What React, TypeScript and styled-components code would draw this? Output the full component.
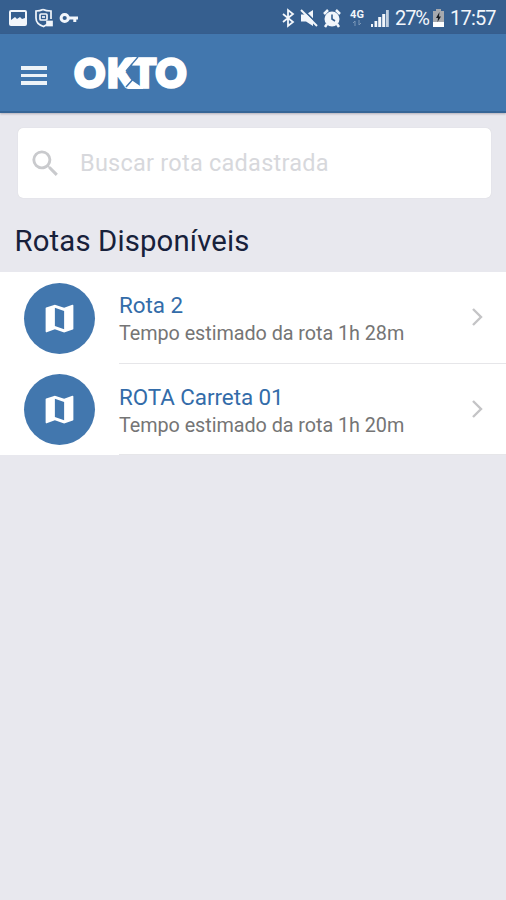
import React from "react";
import styled, { createGlobalStyle } from "styled-components";

const Global = createGlobalStyle`
  * { box-sizing: border-box; }
  body { margin: 0; background: #e8e8ee; font-family: Roboto, "Liberation Sans", sans-serif; }
`;

const Screen = styled.div`
  display: flex;
  flex-direction: column;
  width: 506px;
  height: 900px;
  overflow: hidden;
  background: #e8e8ee;
`;

const StatusBar = styled.div`
  display: flex;
  align-items: center;
  height: 34px;
  flex: none;
  padding: 2px 9px 0 8px;
  background: #365f8f;
  color: #f2f6fb;
`;

const StatusGroup = styled.div<{ $push?: boolean }>`
  display: flex;
  align-items: center;
  height: 32px;
  margin-left: ${(p) => (p.$push ? "auto" : "0")};
`;

const Icon = styled.svg<{ $gap?: number }>`
  display: block;
  flex: none;
  margin-left: ${(p) => p.$gap ?? 0}px;
`;

const StatusText = styled.span<{ $gap: number; $width: number; $spacing: number }>`
  width: ${(p) => p.$width}px;
  margin-left: ${(p) => p.$gap}px;
  font-size: 20px;
  line-height: 32px;
  letter-spacing: ${(p) => p.$spacing}px;
  white-space: nowrap;
`;

const Network = styled.span`
  display: flex;
  flex-direction: column;
  align-items: center;
  width: 16px;
  margin-left: 8px;
  font-size: 11px;
  font-weight: 700;
  line-height: 10px;
`;

const AppBar = styled.header`
  display: flex;
  align-items: center;
  height: 79px;
  flex: none;
  padding-left: 21px;
  background: #4277ae;
  border-bottom: 2px solid #366596;
  box-shadow: 0 1px 2px rgba(80, 70, 80, 0.35);
`;

const MenuButton = styled.button`
  display: flex;
  flex-direction: column;
  gap: 4px;
  width: 26px;
  padding: 0;
  margin-top: 6px;
  border: 0;
  background: none;
`;

const MenuLine = styled.span`
  height: 3.4px;
  background: #edf3f8;
`;

const LogoText = styled.text`
  font-family: Lato, sans-serif;
  font-size: 37px;
  font-weight: 900;
  fill: #fff;
  stroke: #fff;
  stroke-width: 3.6px;
`;

const SearchField = styled.label`
  display: flex;
  align-items: center;
  height: 70px;
  flex: none;
  margin: 15px 15px 0 18px;
  padding-left: 10px;
  border-radius: 5px;
  background: #fff;
  box-shadow: 0 0 1px rgba(0, 0, 0, 0.15);
`;

const SearchInput = styled.input`
  flex: 1;
  min-width: 0;
  margin-left: 17px;
  padding: 0;
  border: 0;
  outline: 0;
  background: none;
  font: 400 23.5px Roboto, sans-serif;
  letter-spacing: 0.25px;
  &::placeholder { color: #d7d8dc; opacity: 1; }
`;

const Heading = styled.h1`
  height: 74px;
  flex: none;
  margin: 0;
  padding: 6px 0 0 14.5px;
  color: #17213b;
  font-size: 29.3px;
  font-weight: 400;
  line-height: 74px;
  letter-spacing: 0.15px;
`;

const List = styled.ul`
  margin: 0;
  padding: 0;
  list-style: none;
  background: #fff;
`;

const Row = styled.li`
  display: flex;
  height: 91.5px;
  padding-left: 24px;
`;

const Badge = styled.div`
  display: flex;
  align-items: center;
  justify-content: center;
  width: 71px;
  height: 71px;
  flex: none;
  margin: 10.5px 24px 0 0;
  border-radius: 50%;
  background: #4277ae;
`;

const RowBody = styled.div`
  display: flex;
  flex: 1;
  align-items: center;
  justify-content: space-between;
  padding-right: 17px;
  border-bottom: 1.5px solid #e6e6e9;
`;

const RowText = styled.div`
  padding-top: 5px;
`;

const RowTitle = styled.div`
  color: #336ca9;
  font-size: 22.4px;
  line-height: 28px;
  letter-spacing: -0.05px;
  white-space: nowrap;
`;

const RowDetail = styled.div`
  color: #757575;
  font-size: 19.8px;
  line-height: 29px;
  letter-spacing: -0.05px;
  white-space: nowrap;
`;

const routes = [
  { name: "Rota 2", time: "1h 28m" },
  { name: "ROTA Carreta 01", time: "1h 20m" },
];

const Logo = () => (
  <Icon $gap={26} width="118" height="48" viewBox="0 -6 118 48" role="img" aria-label="OKTO">
    <LogoText x="1.8 34.2 60.3 83" y="32.4">OKTO</LogoText>
    <path d="M57 24L70 33V34H55Z" fill="#fff" />
    <path d="M53 32L62 22" stroke="#4277ae" strokeWidth="1.5" />
    <path d="M53 16L65 2" stroke="#4277ae" strokeWidth="1.3" />
  </Icon>
);

export default function App() {
  return (
    <>
      <Global />
      <Screen>
        <StatusBar>
          <StatusGroup>
            <Icon width="20" height="18" viewBox="0 0 20 18" fill="none" stroke="currentColor" strokeWidth="2">
              <rect x="2" y="2" width="16" height="14" rx="1" />
              <path d="M3 15V11L7 8L9 10L12 8L14 10L17 9V15Z" fill="currentColor" stroke="none" />
            </Icon>
            <Icon $gap={6} width="20" height="20" viewBox="0 0 20 20" fill="none" stroke="currentColor" strokeWidth="1.7">
              <path d="M9 1.5C7 2.5 5 3 2 3V10C2 14 5 17 9.5 18.5L13 16.5M9 1.5C12 3 14 3 17 3V11" />
              <rect x="6" y="6" width="7" height="6" rx="1" />
              <path d="M8 9H11" />
              <rect x="13" y="13.5" width="5" height="4" fill="currentColor" />
            </Icon>
            <Icon $gap={5} width="20" height="14" viewBox="0 0 20 14" fill="none" stroke="currentColor" strokeWidth="3">
              <circle cx="5.7" cy="7" r="3.6" />
              <path d="M9 7H19M15.8 7V11" />
            </Icon>
          </StatusGroup>
          <StatusGroup $push>
            <Icon width="14" height="20" viewBox="0 0 14 20" fill="none" stroke="currentColor" strokeWidth="1.8">
              <path d="M2 6L12 14L7 18V2L12 6L2 14" />
            </Icon>
            <Icon $gap={5} width="18" height="18" viewBox="0 0 18 18">
              <path d="M1 5.5H6L13 1V17L6 12.5H1Z" fill="currentColor" />
              <path d="M2.5 0L18 15.5" stroke="#365f8f" strokeWidth="1.8" />
              <path d="M1 1L17 17" stroke="currentColor" strokeWidth="2" />
            </Icon>
            <Icon $gap={5} width="18" height="19" viewBox="0 0 18 19">
              <circle cx="9" cy="10" r="7.5" fill="currentColor" />
              <path d="M1 5L5 1M17 5L13 1M4 15L2 18M14 15L16 18" stroke="currentColor" strokeWidth="2.5" />
              <path d="M9 5.5V10L12 12" fill="none" stroke="#365f8f" strokeWidth="1.6" />
            </Icon>
            <Network>
              4G
              <Icon width="10" height="6" viewBox="0 0 10 6" fill="none" stroke="#7b98b8" strokeWidth="1">
                <path d="M3 6V1L1 3M7 0V5L9 3" />
              </Icon>
            </Network>
            <Icon $gap={6} width="18" height="18" viewBox="0 0 18 18" fill="currentColor">
              <path d="M0 15h2v3h-2zM3.5 12h2.7v6h-2.7zM7.2 8h3v10h-3zM11.2 5h3v13h-3z" />
              <path d="M15 1h2.8v17h-2.8z" opacity=".75" />
            </Icon>
            <StatusText $gap={6} $width={33} $spacing={-1.1}>27%</StatusText>
            <Icon $gap={5} width="11" height="18" viewBox="0 0 11 18">
              <path d="M3 0H8V2H11V18H0V2H3Z" fill="#a6a9ae" />
              <path d="M0 13H11V18H0Z" fill="#fff" />
              <path d="M6.5 3L3 9H5L4.5 13L8 7.5H6Z" fill="#181c22" />
            </Icon>
            <StatusText $gap={6} $width={47} $spacing={-0.8}>17:57</StatusText>
          </StatusGroup>
        </StatusBar>
        <AppBar>
          <MenuButton aria-label="Menu">
            <MenuLine />
            <MenuLine />
            <MenuLine />
          </MenuButton>
          <Logo />
        </AppBar>
        <SearchField>
          <Icon width="35" height="35" viewBox="0 0 24 24" fill="#c9cacd">
            <path d="M15.5 14h-.79l-.28-.27A6.47 6.47 0 0 0 16 9.5 6.5 6.5 0 1 0 9.5 16c1.61 0 3.09-.59 4.23-1.57l.27.28v.79l5 4.99L20.49 19l-4.99-5zm-6 0C7.01 14 5 11.99 5 9.5S7.01 5 9.5 5 14 7.01 14 9.5 11.99 14 9.5 14z" />
          </Icon>
          <SearchInput placeholder="Buscar rota cadastrada" />
        </SearchField>
        <Heading>Rotas Disponíveis</Heading>
        <List>
          {routes.map((r) => (
            <Row key={r.name}>
              <Badge>
                <Icon width="37" height="37" viewBox="0 0 24 24" fill="#fff">
                  <path d="M20.5 3l-.16.03L15 5.1 9 3 3.36 4.9c-.21.07-.36.25-.36.48V20.5c0 .28.22.5.5.5l.16-.03L9 18.9l6 2.1 5.64-1.9c.21-.07.36-.25.36-.48V3.5c0-.28-.22-.5-.5-.5zM15 19l-6-2.11V5l6 2.11V19z" />
                </Icon>
              </Badge>
              <RowBody>
                <RowText>
                  <RowTitle>{r.name}</RowTitle>
                  <RowDetail>Tempo estimado da rota {r.time}</RowDetail>
                </RowText>
                <Icon width="24" height="24" viewBox="0 0 24 24" fill="none" stroke="#c4c4c6" strokeWidth="2.4">
                  <path d="M8 4L16 12L8 20" />
                </Icon>
              </RowBody>
            </Row>
          ))}
        </List>
      </Screen>
    </>
  );
}
